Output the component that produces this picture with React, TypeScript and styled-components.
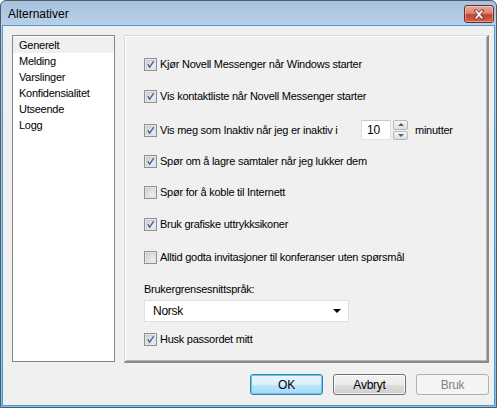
import React from 'react';
import styled, { createGlobalStyle, css } from 'styled-components';

const GlobalStyle = createGlobalStyle`
  html, body {
    margin: 0;
    padding: 0;
    background: #ffffff;
  }
  body {
    font-family: "Liberation Sans", Arial, sans-serif;
    font-size: 11px;
    letter-spacing: -0.25px;
    color: #000;
  }
`;

const Window = styled.div`
  box-sizing: border-box;
  width: 497px;
  height: 408px;
  display: flex;
  flex-direction: column;
  border: 1px solid #4d5b6b;
  border-radius: 6px 6px 0 0;
  padding: 0 1px 1px 1px;
  background: linear-gradient(to bottom, #a7c2de 0px, #b9cfe7 24px, #7ec4e8 100%);
`;

const TitleBar = styled.div`
  height: 24px;
  display: flex;
  align-items: flex-start;
  justify-content: space-between;
  padding-left: 6px;
  font-size: 12px;
  letter-spacing: 0;
`;

const Title = styled.span`
  margin-top: 6px;
  color: #000;
`;

const CloseButton = styled.div`
  box-sizing: border-box;
  width: 30px;
  height: 18px;
  margin-top: 4px;
  margin-right: 1px;
  display: flex;
  align-items: center;
  justify-content: center;
  border: 1px solid #6e2c25;
  border-radius: 3px;
  background: linear-gradient(to bottom, #e8ab9f 0%, #dc8372 45%, #c43f2a 55%, #d56650 100%);
  box-shadow: inset 0 0 0 1px rgba(255, 255, 255, 0.35);
`;

const Client = styled.div`
  flex: 1;
  display: flex;
  flex-direction: column;
  gap: 11px;
  border: 1px solid #4a9bd4;
  background: #f0f0f0;
  padding: 9px 5px 10px 9px;
`;

const Main = styled.div`
  display: flex;
  align-items: flex-start;
  gap: 9px;
  height: 328px;
`;

const NavList = styled.ul`
  box-sizing: border-box;
  list-style: none;
  margin: 0;
  padding: 1px 0 0 0;
  width: 103px;
  height: 327px;
  border: 1px solid #828790;
  background: #ffffff;
`;

const NavItem = styled.li<{ $selected?: boolean }>`
  height: 16px;
  line-height: 16px;
  padding-left: 6px;
  ${(p) =>
    p.$selected &&
    css`
      background: #f0f0f0;
    `}
`;

const Panel = styled.div`
  box-sizing: border-box;
  width: 365px;
  height: 328px;
  display: flex;
  flex-direction: column;
  border-top: 1px solid #dadada;
  border-left: 1px solid #dadada;
  border-right: 2px solid #8a8a8a;
  border-bottom: 2px solid #8a8a8a;
  box-shadow: inset 1px 1px 0 #ffffff, inset -1px -1px 0 #b4b4b4;
  padding: 20px 0 0 19px;
`;

const Row = styled.div<{ $top?: number; $height?: number }>`
  display: flex;
  align-items: center;
  gap: 3px;
  height: ${(p) => p.$height ?? 16}px;
  margin-top: ${(p) => p.$top ?? 0}px;
  white-space: nowrap;
`;

const Label = styled.span<{ $width?: number }>`
  ${(p) =>
    p.$width &&
    css`
      width: ${p.$width}px;
    `}
`;

const FieldLabel = styled.div<{ $top: number }>`
  margin-top: ${(p) => p.$top}px;
  height: 16px;
  line-height: 16px;
`;

const Select = styled.div`
  box-sizing: border-box;
  margin-top: 3px;
  width: 205px;
  height: 22px;
  display: flex;
  align-items: center;
  justify-content: space-between;
  padding: 0 7px 0 8px;
  border: 1px solid #e0e0e0;
  background: #ffffff;
  font-size: 12px;
`;

const Arrow = styled.span`
  width: 0;
  height: 0;
  border-left: 4px solid transparent;
  border-right: 4px solid transparent;
  border-top: 4px solid #000;
`;

const SpinBox = styled.div`
  display: flex;
  align-items: center;
  gap: 2px;
  height: 20px;
`;

const SpinInput = styled.div`
  box-sizing: border-box;
  width: 30px;
  height: 20px;
  line-height: 18px;
  padding-left: 5px;
  border: 1px solid #e0e0e0;
  border-top-color: #c8c8c8;
  background: #ffffff;
  font-size: 12px;
`;

const SpinButtons = styled.div`
  display: flex;
  flex-direction: column;
  gap: 1px;
  height: 20px;
`;

const SpinButton = styled.div<{ $down?: boolean }>`
  box-sizing: border-box;
  width: 15px;
  height: 9.5px;
  display: flex;
  align-items: center;
  justify-content: center;
  border: 1px solid #b8b8b8;
  border-radius: 2px;
  background: linear-gradient(to bottom, #f6f6f6, #dedede);
  &::after {
    content: '';
    width: 0;
    height: 0;
    border-left: 3px solid transparent;
    border-right: 3px solid transparent;
    ${(p) =>
      p.$down
        ? css`
            border-top: 3px solid #4d6185;
          `
        : css`
            border-bottom: 3px solid #4d6185;
          `}
  }
`;

const Unit = styled.span`
  margin-left: 4px;
`;

const ButtonBar = styled.div`
  display: flex;
  justify-content: flex-end;
  gap: 10px;
`;

const Button = styled.div<{ $default?: boolean; $disabled?: boolean }>`
  box-sizing: border-box;
  width: 73px;
  height: 21px;
  display: flex;
  align-items: center;
  justify-content: center;
  border: 1px solid #707070;
  border-radius: 3px;
  background: linear-gradient(to bottom, #f2f2f2 0%, #ebebeb 50%, #dddddd 51%, #cfcfcf 100%);
  box-shadow: inset 0 0 0 1px rgba(255, 255, 255, 0.7);
  font-size: 12px;
  ${(p) =>
    p.$default &&
    css`
      border-color: #3c7fb1;
      box-shadow: inset 0 0 0 1px #5ec9f1;
      background: linear-gradient(to bottom, #eaf6fd 0%, #d9f0fc 50%, #bee6fd 51%, #a7d9f5 100%);
    `}
  ${(p) =>
    p.$disabled &&
    css`
      border-color: #adb2b5;
      background: #f4f4f4;
      box-shadow: none;
      color: #838383;
    `}
`;

const CheckBoxBox = styled.span`
  display: inline-flex;
  width: 13px;
  height: 13px;
  flex: none;
`;

const CheckBox = ({ checked }: { checked?: boolean }) => (
  <CheckBoxBox>
    <svg width="13" height="13" viewBox="0 0 13 13">
      <defs>
        <linearGradient id="cbFill" x1="0" y1="0" x2="1" y2="1">
          <stop offset="0" stopColor="#cbcfd5" />
          <stop offset="1" stopColor="#f4f4f5" />
        </linearGradient>
      </defs>
      <rect x="0.5" y="0.5" width="12" height="12" fill="#f4f4f4" stroke="#8f8f8f" />
      <rect x="2" y="2" width="9" height="9" fill="url(#cbFill)" stroke="#b7bcc3" strokeWidth="0.5" />
      {checked && (
        <path
          d="M3.2 6.4 L4.4 5.9 L5.7 7.9 L9.2 2.8 L10.2 3.4 L5.9 10 L5.4 10 Z"
          fill="#3b5a9b"
        />
      )}
    </svg>
  </CheckBoxBox>
);

const CloseIcon = () => (
  <svg width="14" height="11" viewBox="0 0 14 11">
    <path
      d="M2 1 L5 1 L7 3.5 L9 1 L12 1 L8.6 5.5 L12 10 L9 10 L7 7.5 L5 10 L2 10 L5.4 5.5 Z"
      fill="#ffffff"
      stroke="#5a2620"
      strokeWidth="0.8"
      strokeLinejoin="round"
    />
  </svg>
);

const navItems = ['Generelt', 'Melding', 'Varslinger', 'Konfidensialitet', 'Utseende', 'Logg'];

const App = () => {
  return (
    <>
      <GlobalStyle />
      <Window>
        <TitleBar>
          <Title>Alternativer</Title>
          <CloseButton>
            <CloseIcon />
          </CloseButton>
        </TitleBar>
        <Client>
          <Main>
            <NavList>
              {navItems.map((n, i) => (
                <NavItem key={n} $selected={i === 0}>
                  {n}
                </NavItem>
              ))}
            </NavList>
            <Panel>
              <Row>
                <CheckBox checked />
                <Label>Kjør Novell Messenger når Windows starter</Label>
              </Row>
              <Row $top={16}>
                <CheckBox checked />
                <Label>Vis kontaktliste når Novell Messenger starter</Label>
              </Row>
              <Row $top={16} $height={20}>
                <CheckBox checked />
                <Label $width={198}>Vis meg som Inaktiv når jeg er inaktiv i</Label>
                <SpinBox>
                  <SpinInput>10</SpinInput>
                  <SpinButtons>
                    <SpinButton />
                    <SpinButton $down />
                  </SpinButtons>
                </SpinBox>
                <Unit>minutter</Unit>
              </Row>
              <Row $top={13}>
                <CheckBox checked />
                <Label>Spør om å lagre samtaler når jeg lukker dem</Label>
              </Row>
              <Row $top={15}>
                <CheckBox />
                <Label>Spør for å koble til Internett</Label>
              </Row>
              <Row $top={16}>
                <CheckBox checked />
                <Label>Bruk grafiske uttrykksikoner</Label>
              </Row>
              <Row $top={17}>
                <CheckBox />
                <Label>Alltid godta invitasjoner til konferanser uten spørsmål</Label>
              </Row>
              <FieldLabel $top={16}>Brukergrensesnittspråk:</FieldLabel>
              <Select>
                <span>Norsk</span>
                <Arrow />
              </Select>
              <Row $top={9}>
                <CheckBox checked />
                <Label>Husk passordet mitt</Label>
              </Row>
            </Panel>
          </Main>
          <ButtonBar>
            <Button $default>OK</Button>
            <Button>Avbryt</Button>
            <Button $disabled>Bruk</Button>
          </ButtonBar>
        </Client>
      </Window>
    </>
  );
};

export default App;
